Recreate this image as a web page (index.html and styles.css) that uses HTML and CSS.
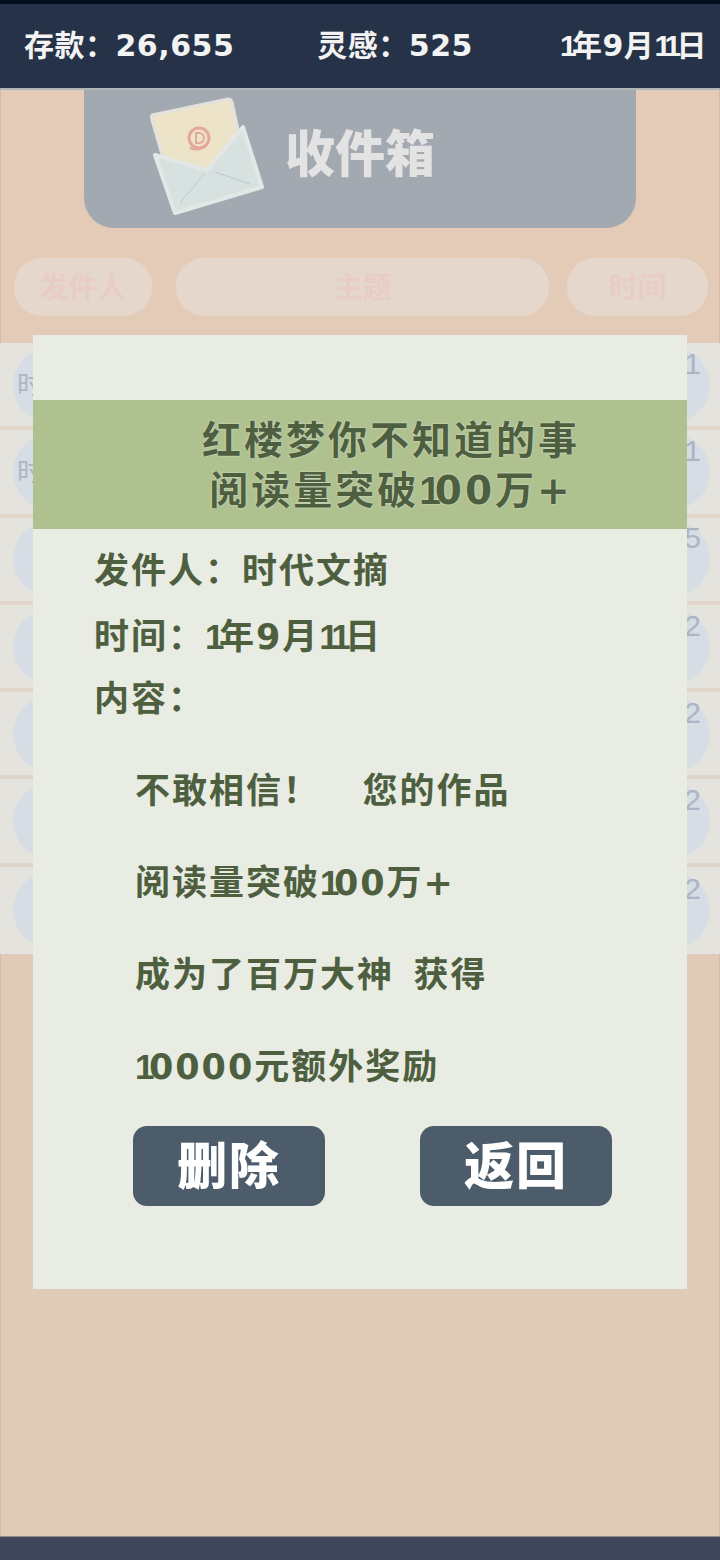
FILE: index.html
```html
<!DOCTYPE html>
<html lang="en">

<head>
  <meta charset="UTF-8">
  <meta name="viewport" content="width=device-width, initial-scale=1.0">
  <link rel="stylesheet" href="styles.css">
</head>

<body>
  <div class="status-bar"></div>

  <div class="top-bar">
    <span class="stat">存款：26,655</span>
    <span class="stat stat-idea">灵感：525</span>
    <span class="stat stat-date"><span class="one">1</span>年9月<span class="one">11</span>日</span>
  </div>

  <div class="screen">
    <div class="inbox-title">
      <svg class="inbox-icon" viewBox="0 0 150 135">
        <path d="M22 25L98 9Q101 9 102 12L109 44L78 80L33 68L22 30Q21 26 22 25Z" fill="#ece3c8" stroke="#e2e1dc" stroke-width="3" stroke-linejoin="round"/>
        <circle cx="69" cy="48" r="10" fill="none" stroke="#e5a79d" stroke-width="3"/>
        <path d="M66 43h3a5 5 0 0 1 0 10h-3zM60 58q6 3 12 0" fill="none" stroke="#e5a79d" stroke-width="2"/>
        <path d="M25 65L77 80L113 37L132 97L45 123Z" fill="#d7e2e0" stroke="#e3e7e5" stroke-width="4" stroke-linejoin="round"/>
        <path d="M75 83L50 113M85 82L120 94" fill="none" stroke="#bccaca" stroke-width="1"/>
      </svg>
      <span class="inbox-text">收件箱</span>
    </div>

    <div class="table-head">
      <div class="head-cell head-from">发件人</div>
      <div class="head-cell head-subject">主题</div>
      <div class="head-cell head-time">时间</div>
    </div>

    <div class="rows">
      <div class="row"><span class="row-left">时</span><span class="row-right">1</span></div>
      <div class="row"><span class="row-left">时</span><span class="row-right">1</span></div>
      <div class="row"><span class="row-left"></span><span class="row-right">5</span></div>
      <div class="row"><span class="row-left"></span><span class="row-right">2</span></div>
      <div class="row"><span class="row-left"></span><span class="row-right">2</span></div>
      <div class="row"><span class="row-left"></span><span class="row-right">2</span></div>
      <div class="row"><span class="row-left"></span><span class="row-right">2</span></div>
    </div>
  </div>

  <div class="bottom-bar"></div>

  <div class="mail-dialog">
    <div class="mail-subject">
      <div>红楼梦你不知道的事</div>
      <div>阅读量突破<span class="one">1</span>00万+</div>
    </div>
    <div class="mail-meta">
      <div class="meta-line">发件人：时代文摘</div>
      <div class="meta-line meta-time">时间：<span class="one">1</span>年9月<span class="one">11</span>日</div>
      <div class="meta-line meta-content">内容：</div>
    </div>
    <div class="mail-body">
      <div class="body-line">不敢相信！&nbsp;&nbsp;&nbsp;您的作品</div>
      <div class="body-line">阅读量突破<span class="one">1</span>00万+</div>
      <div class="body-line">成为了百万大神&ensp;获得</div>
      <div class="body-line"><span class="one">1</span>0000元额外奖励</div>
    </div>
    <div class="mail-actions">
      <button class="mail-btn">删除</button>
      <button class="mail-btn">返回</button>
    </div>
  </div>
</body>

</html>
```

FILE: styles.css
```css
* {
  margin: 0;
  padding: 0;
  box-sizing: border-box;
  font-family: "DejaVu Sans", "Noto Sans CJK SC", sans-serif;
}

body {
  position: relative;
  width: 720px;
  height: 1560px;
  overflow: hidden;
  display: flex;
  flex-direction: column;
  background: #e0cbb9;
}

/* the 1 is a thin bar in the game's font */
.one {
  letter-spacing: -0.16em;
  font-family: "Liberation Sans", sans-serif;
}

.status-bar {
  height: 4px;
  background: #000f1c;
}

.top-bar {
  height: 86px;
  display: flex;
  align-items: center;
  padding: 0 13px 0 24px;
  background: #253248;
  border-bottom: 2px solid #b0b5b8;
}

.stat {
  color: #f2f3f2;
  font-size: 30px;
  font-weight: 700;
  line-height: 40px;
  letter-spacing: 0.5px;
  white-space: nowrap;
}

.stat-idea {
  margin-left: 83px;
}

.stat-date {
  margin-left: auto;
}

.screen {
  flex: 1;
  display: flex;
  flex-direction: column;
  background: linear-gradient(#e4cbb6, #e0cbb9 45%);
  border-left: 1px solid #d6bca8;
  border-right: 1px solid #d6bca8;
}

.inbox-title {
  width: 552px;
  height: 138px;
  margin-left: 83px;
  display: flex;
  align-items: center;
  padding-left: 46px;
  background: #a3a9b0;
  border-radius: 0 0 30px 30px;
}

.inbox-icon {
  width: 150px;
  height: 135px;
  flex-shrink: 0;
  margin-top: -3px;
}

.inbox-text {
  margin: -8px 0 0 5px;
  color: #e2e3e2;
  font-size: 50px;
  font-weight: 900;
  line-height: 60px;
}

.table-head {
  display: flex;
  padding: 30px 0 0 13px;
}

.head-cell {
  height: 58px;
  line-height: 60px;
  text-align: center;
  font-size: 29px;
  font-weight: 700;
  color: #e8cdc6;
  background: #e6d7cd;
  border-radius: 28px;
}

.head-from {
  width: 138px;
}

.head-subject {
  width: 373px;
  margin: 0 18px 0 24px;
}

.head-time {
  width: 141px;
}

.rows {
  margin: 27px -1px 0;
  display: flex;
  flex-direction: column;
}

.row {
  height: 87.3px;
  display: flex;
  align-items: center;
  justify-content: space-between;
  background: #e4e3de;
  border-bottom: 4px solid #e0d5ca;
}

.row:last-child {
  border-bottom: none;
}

.row-left,
.row-right {
  width: 76px;
  height: 76px;
  border-radius: 50%;
  background: #d7dde4;
  color: #abb5c6;
  font-size: 26px;
}

.row-left {
  margin-left: 13px;
  padding-left: 4px;
  line-height: 76px;
}

.row-right {
  margin-right: 10px;
  padding-right: 9px;
  text-align: right;
  line-height: 34px;
  font-family: "Liberation Sans", sans-serif;
  font-size: 30px;
}

.bottom-bar {
  height: 24px;
  background: #3f4659;
  border-top: 1px solid #8f8a84;
}

.mail-dialog {
  position: absolute;
  left: 33px;
  top: 335px;
  width: 654px;
  height: 954px;
  padding-top: 65px;
  background: #e8ece3;
  color: #4e5f3f;
}

.mail-subject {
  height: 129px;
  padding: 16px 0 0 62px;
  background: #aec18f;
  font-size: 39px;
  font-weight: 700;
  line-height: 50px;
  letter-spacing: 3px;
  text-align: center;
  text-shadow: 0 0 2px #e8ece3;
}

.mail-meta {
  padding: 18px 0 0 61px;
}

.meta-line,
.body-line {
  font-size: 35px;
  font-weight: 700;
  line-height: 48px;
  letter-spacing: 2px;
}

.meta-time {
  margin-top: 18px;
}

.meta-content {
  margin-top: 14px;
}

.mail-body {
  display: flex;
  flex-direction: column;
  gap: 44px;
  padding: 44px 0 0 102px;
}

.mail-actions {
  display: flex;
  gap: 95px;
  margin-top: 35px;
  padding-left: 100px;
}

.mail-btn {
  width: 192px;
  height: 80px;
  padding-bottom: 12px;
  border: none;
  border-radius: 14px;
  background: #4c5c6b;
  color: #fff;
  font-size: 50px;
  font-weight: 900;
  letter-spacing: 2px;
}
```
